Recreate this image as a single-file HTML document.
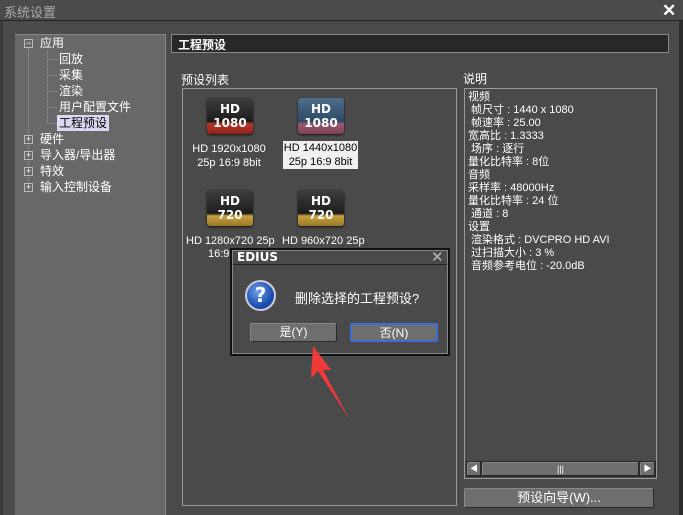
<!DOCTYPE html>
<html><head><meta charset="utf-8"><style>
*{margin:0;padding:0;box-sizing:border-box}
body{width:683px;height:515px;background:#4a4a4a;font-family:"Liberation Sans","Noto Sans CJK SC",sans-serif;font-size:12px;color:#fff;position:relative;overflow:hidden}
.a{position:absolute;white-space:nowrap}
.t{position:absolute;height:16px;line-height:16px;white-space:nowrap}
.pm{position:absolute;width:9px;height:9px;border:1px solid #bbb;background:#686868;font-size:9px;line-height:7px;text-align:center;color:#fff;overflow:hidden}
.ic{position:absolute;width:46px;height:36px;border-radius:3px;box-shadow:0 1px 2px #111;text-align:center;font-weight:bold;color:#fff;font-size:12px;line-height:14px;padding-top:4px;font-family:"DejaVu Sans",sans-serif}
.btn{position:absolute;background:#6e6e6e;border:1px solid #888;border-bottom-color:#2a2a2a;border-right-color:#2a2a2a;border-radius:2px;text-align:center;color:#fff}
.lat{font-size:11px}
.desc div{height:13px;line-height:13px;font-size:11px}
</style></head><body>
<div class="a" style="left:0;top:0;width:683px;height:21px;background:#4b4b4b;border-bottom:1px solid #222"></div>
<div class="a" style="left:4px;top:2px;font-size:13px;color:#aaa">系统设置</div>
<div class="a" style="left:662px;top:1px;font-size:17px;font-weight:bold;color:#fff">✕</div>
<div class="a" style="left:679px;top:21px;width:4px;height:494px;background:#2a2a2a"></div>
<div class="a" style="left:0;top:21px;width:3px;height:494px;background:#3a3a3a"></div>
<div class="a" style="left:15px;top:34px;width:151px;height:481px;background:#686868;border-top:1px solid #888;border-right:1px solid #888"></div>
<div class="a" style="left:28px;top:48px;height:140px;border-left:1px dotted #999"></div>
<div class="a" style="left:47px;top:51px;height:72px;border-left:1px dotted #999"></div>
<div class="pm" style="left:24px;top:39px">−</div><div class="t" style="left:40px;top:35px">应用</div>
<div class="a" style="left:48px;top:59px;width:9px;border-top:1px dotted #999"></div><div class="t" style="left:59px;top:51px">回放</div>
<div class="a" style="left:48px;top:75px;width:9px;border-top:1px dotted #999"></div><div class="t" style="left:59px;top:67px">采集</div>
<div class="a" style="left:48px;top:91px;width:9px;border-top:1px dotted #999"></div><div class="t" style="left:59px;top:83px">渲染</div>
<div class="a" style="left:48px;top:107px;width:9px;border-top:1px dotted #999"></div><div class="t" style="left:59px;top:99px">用户配置文件</div>
<div class="a" style="left:48px;top:123px;width:9px;border-top:1px dotted #999"></div><div class="t" style="left:57px;top:115px;background:#d9d9f2;color:#000;padding:0 2px;width:52px">工程预设</div>
<div class="pm" style="left:24px;top:135px">+</div><div class="t" style="left:40px;top:131px">硬件</div>
<div class="pm" style="left:24px;top:151px">+</div><div class="t" style="left:40px;top:147px">导入器/导出器</div>
<div class="pm" style="left:24px;top:167px">+</div><div class="t" style="left:40px;top:163px">特效</div>
<div class="pm" style="left:24px;top:183px">+</div><div class="t" style="left:40px;top:179px">输入控制设备</div>
<div class="a" style="left:171px;top:34px;width:498px;height:19px;background:#282828;border:1px solid #8a8a8a"></div>
<div class="a" style="left:178px;top:36px;font-weight:bold;font-size:12px">工程预设</div>
<div class="a" style="left:181px;top:71px">预设列表</div>
<div class="a" style="left:463px;top:70px">说明</div>
<div class="a" style="left:182px;top:88px;width:275px;height:418px;border:1px solid #9a9a9a"></div>
<div class="ic" style="left:207px;top:98px;background:linear-gradient(#3e3e3e,#1c1c1c 65%,#b8352a 72%,#8a2418)">HD<br>1080</div>
<div class="ic" style="left:298px;top:98px;background:linear-gradient(#4f6e8c,#2c4a66 65%,#9a5870 72%,#7a4255)">HD<br>1080</div>
<div class="ic" style="left:207px;top:190px;background:linear-gradient(#3e3e3e,#1c1c1c 65%,#c8a040 72%,#9a7a28)">HD<br>720</div>
<div class="ic" style="left:298px;top:190px;background:linear-gradient(#3e3e3e,#1c1c1c 65%,#c8a040 72%,#9a7a28)">HD<br>720</div>
<div class="a lat" style="left:189px;top:142px;width:80px;text-align:center;line-height:14px">HD 1920x1080<br>25p 16:9 8bit</div>
<div class="a lat" style="left:283px;top:141px;width:75px;height:28px;background:#f0f0f0;color:#000;text-align:center;line-height:14px">HD 1440x1080<br>25p 16:9 8bit</div>
<div class="a lat" style="left:186px;top:234px;line-height:14px">HD 1280x720 25p</div>
<div class="a lat" style="left:208px;top:247px;line-height:14px">16:9</div>
<div class="a lat" style="left:282px;top:234px;line-height:14px">HD 960x720 25p</div>
<div class="a" style="left:464px;top:88px;width:193px;height:391px;border:1px solid #9a9a9a"></div>
<div class="a desc" style="left:468px;top:91px">
<div>视频</div><div>&nbsp;帧尺寸 : 1440 x 1080</div><div>&nbsp;帧速率 : 25.00</div><div>宽高比 : 1.3333</div><div>&nbsp;场序 : 逐行</div><div>量化比特率 : 8位</div><div>音频</div><div>采样率 : 48000Hz</div><div>量化比特率 : 24 位</div><div>&nbsp;通道 : 8</div><div>设置</div><div>&nbsp;渲染格式 : DVCPRO HD AVI</div><div>&nbsp;过扫描大小 : 3 %</div><div>&nbsp;音频参考电位 : -20.0dB</div>
</div>
<div class="a" style="left:466px;top:461px;width:190px;height:16px;background:#2a2a2a"></div>
<div class="btn" style="left:467px;top:462px;width:14px;height:14px;font-size:8px;line-height:12px">◀</div>
<div class="btn" style="left:482px;top:462px;width:157px;height:14px;font-size:9px;line-height:12px">|||</div>
<div class="btn" style="left:640px;top:462px;width:15px;height:14px;font-size:8px;line-height:12px">▶</div>
<div class="btn" style="left:464px;top:488px;width:190px;height:20px;line-height:18px;font-size:13px">预设向导(W)...</div>
<div class="a" style="left:230px;top:248px;width:220px;height:108px;background:#4a4a4a;border:2px solid #111;outline:1px solid #888;outline-offset:-3px"></div>
<div class="a" style="left:233px;top:264px;width:214px;height:1px;background:#222"></div>
<div class="a" style="left:237px;top:250px;font-weight:bold;font-size:12px;font-family:'DejaVu Sans',sans-serif">EDIUS</div>
<div class="a" style="left:431px;top:248px;font-size:15px;color:#bbb">✕</div>
<div class="a" style="left:245px;top:280px;width:31px;height:31px;border-radius:50%;background:radial-gradient(circle at 40% 35%,#6fa0e8,#1d4fb0 60%,#123a88);border:2px solid #ccd;text-align:center;color:#fff;font-weight:bold;font-size:20px;line-height:27px;font-family:'DejaVu Sans',sans-serif">?</div>
<div class="a" style="left:295px;top:288px;font-size:13px">删除选择的工程预设?</div>
<div class="btn" style="left:250px;top:323px;width:87px;height:19px;line-height:17px">是(Y)</div>
<div class="btn" style="left:350px;top:323px;width:88px;height:19px;line-height:17px;border:2px solid #3b6fd6">否(N)</div>
<svg class="a" style="left:0;top:0" width="683" height="515"><polygon points="313,346 331,370 323,370 350,420 318,371 311,378" fill="#f03a3a"/></svg>
</body></html>
